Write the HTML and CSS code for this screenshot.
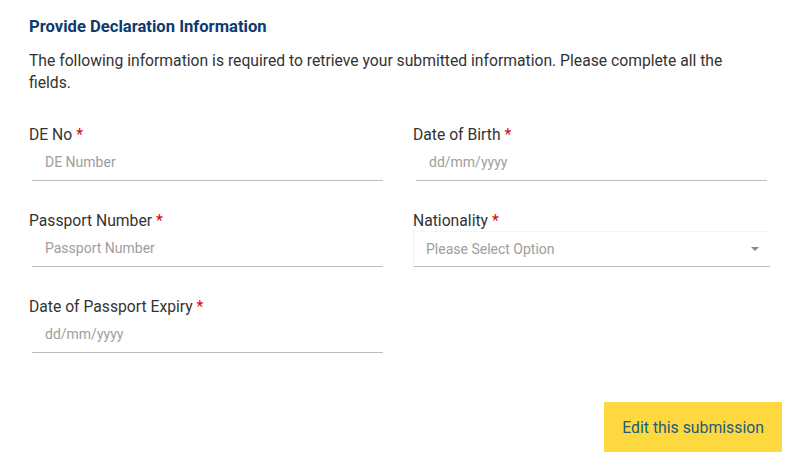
FILE: index.html
```html
<!DOCTYPE html>
<html>
<head>
<meta charset="utf-8">
<link rel="stylesheet" href="styles.css">
</head>
<body>
<div class="page">
  <h2 class="title">Provide Declaration Information</h2>
  <p class="intro">The following information is required to retrieve your submitted information. Please complete all the fields.</p>
  <div class="grid">
    <div class="field">
      <label class="label">DE No <span class="req">*</span></label>
      <input class="input" type="text" placeholder="DE Number">
    </div>
    <div class="field">
      <label class="label">Date of Birth <span class="req">*</span></label>
      <input class="input" type="text" placeholder="dd/mm/yyyy">
    </div>
    <div class="field">
      <label class="label">Passport Number <span class="req">*</span></label>
      <input class="input" type="text" placeholder="Passport Number">
    </div>
    <div class="field">
      <label class="label">Nationality <span class="req">*</span></label>
      <div class="select">
        <span class="select-text">Please Select Option</span>
        <span class="caret"></span>
      </div>
    </div>
    <div class="field">
      <label class="label">Date of Passport Expiry <span class="req">*</span></label>
      <input class="input" type="text" placeholder="dd/mm/yyyy">
    </div>
  </div>
  <div class="actions">
    <button class="btn" type="button">Edit this submission</button>
  </div>
</div>
</body>
</html>
```
FILE: styles.css
```css
* { box-sizing: border-box; }
body {
  margin: 0;
  background: #fff;
  font-family: Roboto, "Liberation Sans", sans-serif;
  color: #333;
}
.page {
  padding: 16px 18px 0 29px;
}
.title {
  margin: 0;
  font-size: 16.6px;
  line-height: 22px;
  font-weight: 700;
  color: #0d3a70;
}
.intro {
  margin: 12px 0 0;
  max-width: 730px;
  font-size: 15.7px;
  line-height: 22px;
  color: #333;
}
.grid {
  display: grid;
  grid-template-columns: 369px 369px;
  column-gap: 15px;
  row-gap: 29px;
  margin-top: 30px;
}
.field {
  display: flex;
  flex-direction: column;
}
.label {
  font-size: 15.7px;
  line-height: 22px;
  margin-bottom: -1px;
  color: #333;
}
.req { color: #e10000; }
.input {
  margin-left: 3px;
  width: 351px;
  height: 36px;
  border: none;
  border-bottom: 1px solid #bdbdbd;
  padding: 0 0 1px 13px;
  font-family: Roboto, "Liberation Sans", sans-serif;
  font-size: 14px;
  color: #333;
  outline: none;
  background: transparent;
}
.input::placeholder { color: #9e9e9e; }
.select {
  width: 357px;
  height: 36px;
  display: flex;
  align-items: center;
  justify-content: space-between;
  border-top: 1px solid #f6f6f6;
  border-left: 1px solid #f3f3f3;
  border-bottom: 1px solid #bdbdbd;
  padding: 0 11px 0 12px;
}
.select-text {
  font-size: 14px;
  color: #9e9e9e;
}
.caret {
  width: 0;
  height: 0;
  border-left: 4px solid transparent;
  border-right: 4px solid transparent;
  border-top: 4px solid #8a8a8a;
}
.actions {
  display: flex;
  justify-content: flex-end;
  margin-top: 49px;
}
.btn {
  height: 50px;
  padding: 0 18px;
  border: none;
  background: #fdd83e;
  color: #1f5a80;
  font-family: Roboto, "Liberation Sans", sans-serif;
  font-size: 15.8px;
}
```
